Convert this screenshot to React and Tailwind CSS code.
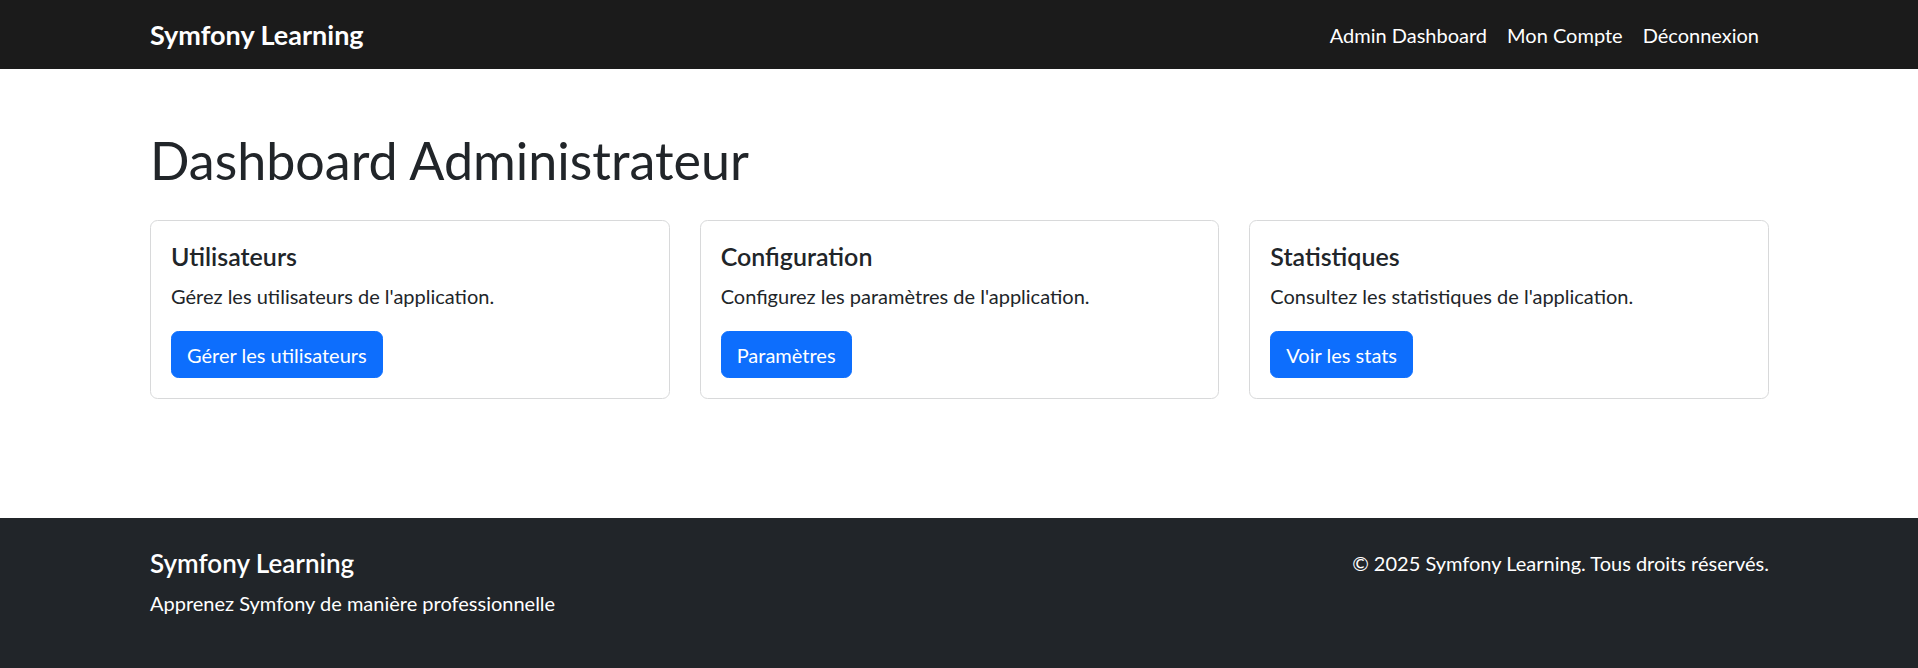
const cards = [
  {
    title: 'Utilisateurs',
    text: "Gérez les utilisateurs de l'application.",
    action: 'Gérer les utilisateurs',
  },
  {
    title: 'Configuration',
    text: "Configurez les paramètres de l'application.",
    action: 'Paramètres',
  },
  {
    title: 'Statistiques',
    text: "Consultez les statistiques de l'application.",
    action: 'Voir les stats',
  },
]

export default function App() {
  return (
    <div className="min-h-screen flex flex-col bg-white font-['Lato',sans-serif] text-[20px] leading-[1.5] text-[#212529]">
      {/* Navbar */}
      <nav className="bg-[#1b1b1b] h-[69px] flex items-center">
        <div className="w-[1650px] mx-auto pl-[16px] pr-[15px] flex items-center justify-between">
          <a href="#" className="text-[27px] leading-[37px] font-bold text-white">
            Symfony Learning
          </a>
          <ul className="flex">
            <li>
              <a href="#" className="block px-[10px] py-[10px] leading-[30px] text-white">
                Admin Dashboard
              </a>
            </li>
            <li>
              <a href="#" className="block px-[10px] py-[10px] leading-[30px] text-white">
                Mon Compte
              </a>
            </li>
            <li>
              <a href="#" className="block px-[10px] py-[10px] leading-[30px] text-white">
                Déconnexion
              </a>
            </li>
          </ul>
        </div>
      </nav>

      {/* Main */}
      <main className="flex-1 w-[1650px] mx-auto pl-[16px] pr-[15px] pt-[60px]">
        <h1 className="text-[52px] leading-[1.2] font-normal mb-[29px]">Dashboard Administrateur</h1>
        <div className="grid grid-cols-3 gap-[30px]">
          {cards.map((card) => (
            <div key={card.title} className="border border-[#d8d9da] rounded-[7.5px] p-[20px] bg-white">
              <h5 className="text-[25px] leading-[30px] font-semibold mb-[10px]">{card.title}</h5>
              <p className="leading-[30px] mb-[20px]">{card.text}</p>
              <a
                href="#"
                className="inline-block bg-[#0d6efd] border border-[#0d6efd] text-white px-[15px] py-[7.5px] leading-[30px] rounded-[7.5px]"
              >
                {card.action}
              </a>
            </div>
          ))}
        </div>
      </main>

      {/* Footer */}
      <footer className="bg-[#212529] text-white py-[30px]">
        <div className="w-[1650px] mx-auto pl-[16px] pr-[15px] flex justify-between">
          <div>
            <h5 className="text-[26px] leading-[30px] font-semibold mb-[10px]">Symfony Learning</h5>
            <p className="leading-[30px] mb-[20px]">Apprenez Symfony de manière professionnelle</p>
          </div>
          <p className="leading-[30px]">© 2025 Symfony Learning. Tous droits réservés.</p>
        </div>
      </footer>
    </div>
  )
}
